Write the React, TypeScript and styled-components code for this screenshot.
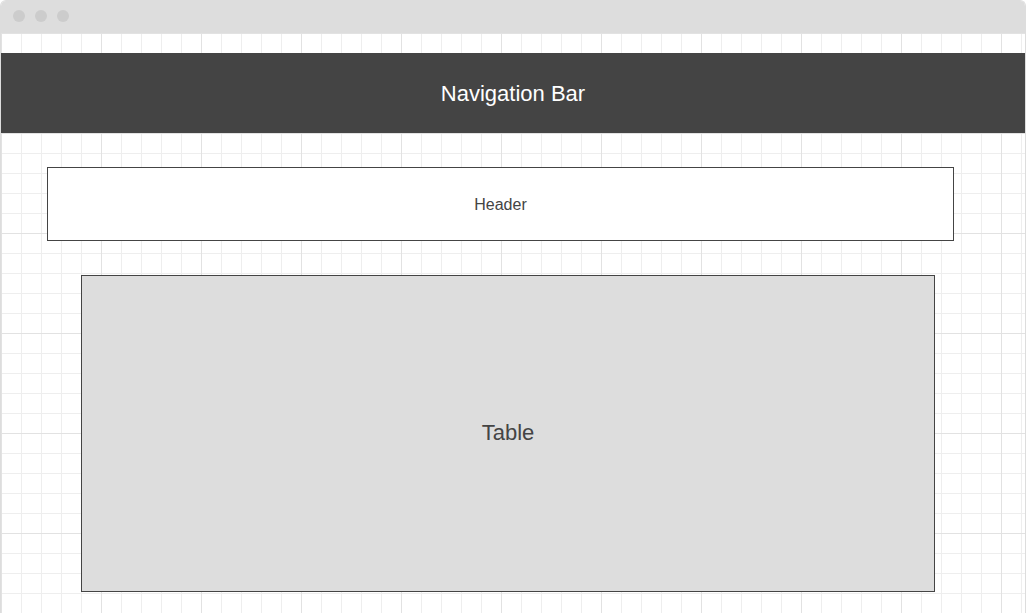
import React from "react";
import styled, { createGlobalStyle } from "styled-components";

const Global = createGlobalStyle`
  html, body { margin: 0; padding: 0; background: #ffffff; }
  body { font-family: "Liberation Sans", Arial, sans-serif; }
`;

const Window = styled.div`
  width: 1026px;
  height: 613px;
  box-sizing: border-box;
  border: 1px solid #dddddd;
  border-bottom: none;
  border-radius: 6px 6px 0 0;
  overflow: hidden;
  display: flex;
  flex-direction: column;
`;

const TitleBar = styled.div`
  height: 32px;
  flex: none;
  box-sizing: border-box;
  padding: 0 0 2px 12px;
  background: #dddddd;
  display: flex;
  align-items: center;
  gap: 10px;
`;

const Dot = styled.span`
  width: 12px;
  height: 12px;
  border-radius: 50%;
  background: #cccccc;
`;

const Canvas = styled.div`
  flex: 1;
  display: flex;
  flex-direction: column;
  align-items: flex-start;
  background-color: #ffffff;
  background-image:
    linear-gradient(to right, #e2e2e2 1px, transparent 1px),
    linear-gradient(to bottom, #e2e2e2 1px, transparent 1px),
    linear-gradient(to right, #eeeeee 1px, transparent 1px),
    linear-gradient(to bottom, #eeeeee 1px, transparent 1px);
  background-size: 100px 100px, 100px 100px, 20px 20px, 20px 20px;
  background-position: 0 0;
`;

const NavBar = styled.div`
  margin-top: 20px;
  width: 100%;
  height: 80px;
  box-sizing: border-box;
  padding-top: 2px;
  background: #444444;
  color: #ffffff;
  font-size: 22px;
  display: flex;
  align-items: center;
  justify-content: center;
`;

const Box = styled.div<{ $left: number; $w: number; $h: number; $bg: string; $size: number; $dy: number }>`
  margin-top: 34px;
  margin-left: ${(p) => p.$left}px;
  width: ${(p) => p.$w}px;
  height: ${(p) => p.$h}px;
  box-sizing: border-box;
  border: 1px solid #444444;
  padding-top: ${(p) => Math.max(0, p.$dy)}px;
  padding-bottom: ${(p) => Math.max(0, -p.$dy)}px;
  background: ${(p) => p.$bg};
  color: #444444;
  font-size: ${(p) => p.$size}px;
  display: flex;
  align-items: center;
  justify-content: center;
`;

export default function App() {
  return (
    <>
      <Global />
      <Window>
        <TitleBar>
          <Dot />
          <Dot />
          <Dot />
        </TitleBar>
        <Canvas>
          <NavBar>Navigation Bar</NavBar>
          <Box $left={46} $w={907} $h={74} $bg="#ffffff" $size={16} $dy={2}>
            Header
          </Box>
          <Box $left={80} $w={854} $h={317} $bg="#dddddd" $size={22} $dy={-2}>
            Table
          </Box>
        </Canvas>
      </Window>
    </>
  );
}
